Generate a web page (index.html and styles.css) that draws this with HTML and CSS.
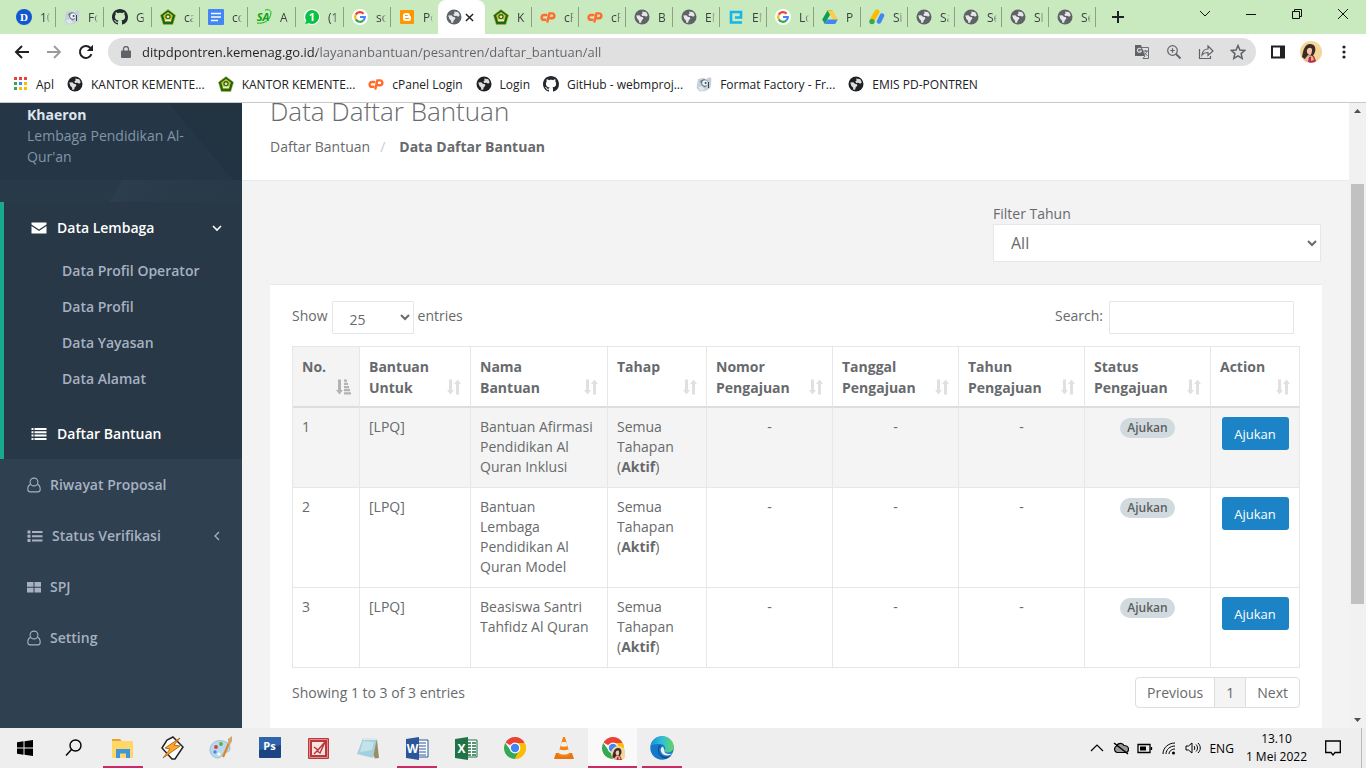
FILE: index.html
```html
<!DOCTYPE html>
<html lang="id">

<head>
    <meta charset="UTF-8">
    <meta name="viewport" content="width=device-width, initial-scale=1.0">
    <title>Data Daftar Bantuan</title>
    <link rel="stylesheet" href="styles.css">
</head>

<body>
    <!-- shared icons -->
    <svg class="sprite" aria-hidden="true">
        <symbol id="globe" viewBox="0 0 16 16">
            <circle cx="8" cy="8" r="7.5" fill="currentColor" />
            <path d="M2.2 6.6l3.2-.4 1.4 1.6 2.2.4.3 1.6-1.5 1.4-.6 2.2-1.8.7-.4-2.6-1.6-1.4zM8.2 2.6l4 .6 1.6 3-1.6 1.5-1.8-1-2.1.3-1-1.4 1.3-1z" fill="#fff" opacity=".85" />
        </symbol>
        <symbol id="kemenag" viewBox="0 0 16 16">
            <path d="M8 .6l7.6 5.6-2.8 9.2H3.2L.4 6.2z" fill="#14691d" stroke="#c9b52c" stroke-width=".5" />
            <path d="M8 3l4.8 3.6-1.8 6.2H5L3.2 6.6z" fill="#d5bd2a" />
            <circle cx="8" cy="7.6" r="2.6" fill="#14691d" />
            <path d="M5 10.4h6v1.6H5zM8 5.6l.6 1.4h1.3l-1 1 .4 1.4L8 8.7l-1.3.7.4-1.4-1-1h1.3z" fill="#efe9c0" />
        </symbol>
        <symbol id="github" viewBox="0 0 16 16">
            <path fill="#24292e" fill-rule="evenodd" d="M8 0C3.58 0 0 3.58 0 8c0 3.54 2.29 6.53 5.47 7.59.4.07.55-.17.55-.38 0-.19-.01-.82-.01-1.49-2.01.37-2.53-.49-2.69-.94-.09-.23-.48-.94-.82-1.13-.28-.15-.68-.52-.01-.53.63-.01 1.08.58 1.23.82.72 1.21 1.87.87 2.33.66.07-.52.28-.87.51-1.07-1.78-.2-3.64-.89-3.64-3.95 0-.87.31-1.59.82-2.15-.08-.2-.36-1.02.08-2.12 0 0 .67-.21 2.2.82.64-.18 1.32-.27 2-.27s1.36.09 2 .27c1.53-1.04 2.2-.82 2.2-.82.44 1.1.16 1.92.08 2.12.51.56.82 1.27.82 2.15 0 3.07-1.87 3.75-3.65 3.95.29.25.54.73.54 1.48 0 1.07-.01 1.93-.01 2.2 0 .21.15.46.55.38A8.01 8.01 0 0 0 16 8c0-4.42-3.58-8-8-8z" />
        </symbol>
        <symbol id="cpanel" viewBox="0 0 16 16">
            <path d="M6.3 6H4a2.4 2.4 0 0 0 0 4.8h1.2M7.4 12.6l2-8.2H12a2.3 2.3 0 0 1 0 4.8h-2" fill="none" stroke="#ff6c2c" stroke-width="2.4" stroke-linecap="round" />
        </symbol>
        <symbol id="factory" viewBox="0 0 16 16">
            <path d="M2 3l5-1 3 1 4-2 1.5 2-1 9-5 3-6 .5L.6 12z" fill="#c5d0dc" />
            <path d="M4 5l4-2 4 2-1 5-4 2z" fill="#66778c" />
            <circle cx="9" cy="7" r="2.800" fill="#edf2f7" />
            <circle cx="9.6" cy="7" r="1" fill="#39485c" />
            <path d="M2 11l5-1 2 4-5 .8z" fill="#dfe6ee" />
            <path d="M12.500 6v6" stroke="#34435a" />
        </symbol>
        <symbol id="google" viewBox="0 0 16 16">
            <circle cx="8" cy="8" r="8" fill="#fff" />
            <g fill="none" stroke-width="2.2">
                <path d="M3.8 5.6A4.8 4.8 0 0 1 11.5 4.7" stroke="#ea4335" />
                <path d="M3.8 5.6a4.8 4.8 0 0 0 0 4.8" stroke="#fbbc05" />
                <path d="M3.8 10.4a4.8 4.8 0 0 0 7.5 1.1" stroke="#34a853" />
                <path d="M11.3 11.5A4.8 4.8 0 0 0 12.8 8H8" stroke="#4285f4" />
            </g>
        </symbol>
        <symbol id="chrome" viewBox="0 0 24 24">
            <path d="M12 12L2.5 6.5A11 11 0 0 1 21.5 6.5z" fill="#ea4335" />
            <path d="M12 12V7h9.8A11 11 0 0 1 11.5 23z" fill="#fbbc05" />
            <path d="M2.2 7L7.7 14.5 16.3 14.5 11.8 23A11 11 0 0 1 2.2 7z" fill="#34a853" />
            <path d="M16.3 14.5L11.8 23A11 11 0 0 0 21.8 7H12z" fill="#fbbc05" />
            <circle cx="12" cy="12" r="5.4" fill="#fff" />
            <circle cx="12" cy="12" r="4.2" fill="#4285f4" />
        </symbol>
        <symbol id="face" viewBox="0 0 22 22">
            <circle cx="11" cy="11" r="11" fill="#f3d69a" />
            <path d="M2 16C3 9 5 3 10 3c5 0 6 4 5 8l-3 6-6 2z" fill="#3b2a25" />
            <path d="M7 9c1-3 5-3 5 0 0 3-1 5-2 5s-4-2-3-5z" fill="#f4c6ad" />
            <path d="M4 19l4-5 5 1 2 5c-3 2-8 2-11-1z" fill="#e9b59a" />
            <path d="M8 21l1-5 5-1 2 5c-2 2-5 2-8 1z" fill="#b3256a" />
            <path d="M11 15l2 1 1 3-3 1z" fill="#e8c33a" />
        </symbol>
        <symbol id="user" viewBox="0 0 14 16">
            <circle cx="7" cy="5" r="3.9" fill="none" stroke="currentColor" stroke-width="1.1" />
            <path d="M3.6 7.4C1.6 8 .8 10 .8 12.3c0 1.6 1 2.6 2.3 2.6h7.8c1.3 0 2.3-1 2.3-2.6 0-2.3-.8-4.3-2.8-4.9" fill="none" stroke="currentColor" stroke-width="1.1" />
        </symbol>
        <symbol id="sort" viewBox="0 0 14 16">
            <path d="M2 .5h3V11h2l-3.500 4.500L0 11h2zM9 15.500h3V5h2L10.500.5 7 5h2z" fill="currentColor" />
        </symbol>
        <symbol id="sort-asc" viewBox="0 0 15 16">
            <path d="M2 .5h3V11h2l-3.500 4.500L0 11h2zM8 .5h3v2.300H8zM8 3.700h4V6H8zM8 6.900h5v2.300H8zM8 10h6v2.300H8zM8 13.200h7v2.300H8z" fill="currentColor" />
        </symbol>
        <linearGradient id="edge-top" x1="0" y1="0" x2="1" y2="0">
            <stop offset="0" stop-color="#1b8fd6" />
            <stop offset=".5" stop-color="#2fc0d8" />
            <stop offset="1" stop-color="#62d85c" />
        </linearGradient>
    </svg>

    <header class="browser">
        <div class="tab-strip">
            <nav class="tabs" aria-label="Tab">
                <button class="tab"><svg viewBox="0 0 16 16"><circle cx="8" cy="8" r="8" fill="#1257d0" /><text x="8" y="12" class="fav-text serif">D</text></svg><span>10</span></button>
                <button class="tab"><svg><use href="#factory" /></svg><span>Fo</span></button>
                <button class="tab"><svg><use href="#github" /></svg><span>G</span></button>
                <button class="tab"><svg><use href="#kemenag" /></svg><span>ca</span></button>
                <button class="tab"><svg viewBox="0 0 16 16"><rect width="16" height="16" rx="1" fill="#4285f4" /><path d="M3 4.500h10M3 8h10M3 11.500h7" stroke="#fff" stroke-width="1.600" /></svg><span>co</span></button>
                <button class="tab"><svg viewBox="0 0 16 16"><path d="M1 14c7 1 13-2 14-10M9 1c5-1 6 1 6 3" fill="none" stroke="#15b51c" /><text x="7" y="12" class="fav-text green">SA</text></svg><span>A</span></button>
                <button class="tab"><svg viewBox="0 0 16 16"><circle cx="8" cy="8" r="8" fill="#fff" /><path d="M8 1a7 7 0 1 1-3 13.300L1.200 15l1-3.400A7 7 0 0 1 8 1z" fill="#0ac244" /><text x="8" y="12" class="fav-text">1</text></svg><span>(1</span></button>
                <button class="tab"><svg><use href="#google" /></svg><span>so</span></button>
                <button class="tab"><svg viewBox="0 0 16 16"><rect x="1" y="1" width="14" height="14" rx="1" fill="#ff9800" /><path d="M6.500 4h2.200a2 2 0 0 1 2 2c0 1 .3 1 1.300 1.400v2.400A2.200 2.200 0 0 1 9.800 12H6.500A2.500 2.500 0 0 1 4 9.500v-3A2.500 2.500 0 0 1 6.500 4z" fill="#fff" /><path d="M6.300 6.500h2M6.300 9.500h3.500" stroke="#ff9800" stroke-linecap="round" /></svg><span>Po</span></button>
                <button class="tab active"><svg><use href="#globe" /></svg><svg class="tab-close" viewBox="0 0 10 10"><path d="M1 1l8 8M9 1L1 9" stroke="#202124" stroke-width="1.600" /></svg></button>
                <button class="tab"><svg><use href="#kemenag" /></svg><span>K</span></button>
                <button class="tab"><svg><use href="#cpanel" /></svg><span>cP</span></button>
                <button class="tab"><svg><use href="#cpanel" /></svg><span>cP</span></button>
                <button class="tab"><svg><use href="#globe" /></svg><span>B</span></button>
                <button class="tab"><svg><use href="#globe" /></svg><span>EM</span></button>
                <button class="tab"><svg viewBox="0 0 16 16"><path d="M14 13.500H3V3h10v5.500H7" fill="none" stroke="#13b5ea" stroke-width="2.600" /></svg><span>EM</span></button>
                <button class="tab"><svg><use href="#google" /></svg><span>Lo</span></button>
                <button class="tab"><svg viewBox="0 0 16 16"><path d="M5.500 1.500h5L5.300 10.600 2.800 15 .2 10.500z" fill="#0f9d58" /><path d="M5.500 1.500h5l5.300 9h-5z" fill="#ffcd40" /><path d="M5.300 10.500h10.500L13.200 15H2.800z" fill="#4285f4" /></svg><span>P</span></button>
                <button class="tab"><svg viewBox="0 0 16 16"><path d="M8 3L3.500 10.500" stroke="#fbbc04" stroke-width="5" stroke-linecap="round" /><path d="M13 6.500L10 12.500" stroke="#4285f4" stroke-width="4.500" stroke-linecap="round" /><circle cx="3" cy="12.600" r="2.700" fill="#34a853" /></svg><span>Si</span></button>
                <button class="tab"><svg><use href="#globe" /></svg><span>Sa</span></button>
                <button class="tab"><svg><use href="#globe" /></svg><span>Se</span></button>
                <button class="tab"><svg><use href="#globe" /></svg><span>SI</span></button>
                <button class="tab"><svg><use href="#globe" /></svg><span>Se</span></button>
            </nav>
            <button class="new-tab" aria-label="Tab baru"><svg viewBox="0 0 12 12"><path d="M6 0v12M0 6h12" stroke="#202124" stroke-width="2" /></svg></button>
            <div class="window-buttons">
                <button aria-label="Cari tab"><svg viewBox="0 0 12 12"><path d="M1 3l5 5 5-5" /></svg></button>
                <button aria-label="Minimize"><svg viewBox="0 0 12 12"><path d="M1 6.500h10" /></svg></button>
                <button aria-label="Restore"><svg viewBox="0 0 12 12"><path d="M1.500 3.500h7v7h-7zM3.500 3.500v-2h7v7h-2" /></svg></button>
                <button aria-label="Close"><svg viewBox="0 0 12 12"><path d="M1 1l10 10M11 1L1 11" /></svg></button>
            </div>
        </div>

        <div class="toolbar">
            <div class="nav-buttons">
                <button aria-label="Kembali"><svg viewBox="0 0 16 16"><path d="M15 8H2M8 2L2 8l6 6" stroke-width="2" /></svg></button>
                <button class="disabled" aria-label="Maju"><svg viewBox="0 0 16 16"><path d="M1 8h13M8 2l6 6-6 6" stroke-width="1.800" /></svg></button>
                <button aria-label="Muat ulang"><svg viewBox="0 0 16 16"><path d="M13.500 10.200A6 6 0 1 1 12.300 3.800L13.500 5" stroke-width="2" /><path d="M15 .8V7H8.800z" fill="#202124" stroke="none" /></svg></button>
            </div>
            <div class="omnibox">
                <svg class="lock" viewBox="0 0 10 12"><path d="M1 4.500h8a1 1 0 0 1 1 1V11a1 1 0 0 1-1 1H1a1 1 0 0 1-1-1V5.500a1 1 0 0 1 1-1z" fill="#5f6368" /><path d="M2.500 5V3a2.500 2.500 0 0 1 5 0v2" fill="none" stroke="#5f6368" stroke-width="1.300" /></svg>
                <input type="text" class="url" aria-label="Alamat" value="ditpdpontren.kemenag.go.id/layananbantuan/pesantren/daftar_bantuan/all">
                <div class="nav-buttons">
                    <button aria-label="Terjemahkan"><svg viewBox="0 0 16 16"><path d="M1 1h6l4 11H1z" fill="#5f6368" stroke="none" /><path d="M8 3.500h6.500v11H9l2-2.500M9 7h5M11.500 6v1.500M13 7c0 2-2 3.500-3 4M10.500 8.500c.5 1.500 2 2.500 3 3" stroke-width=".9" /><path d="M7 5a2 2 0 1 0 .3 2H5.500" stroke="#e0e0e0" /></svg></button>
                    <button aria-label="Zoom"><svg viewBox="0 0 16 16"><circle cx="6.500" cy="6.500" r="4.800" /><path d="M10 10l4.500 4.500" stroke-width="1.800" /><path d="M4.300 6.500h4.400M6.500 4.300v4.400" /></svg></button>
                    <button aria-label="Bagikan"><svg viewBox="0 0 16 16"><path d="M1.500 5v9.500h11V12M4 11c.5-4 3-6 6-6V2l5 5-5 4.500V8.500C7.500 8.500 5.500 9 4 11z" /></svg></button>
                    <button aria-label="Tandai"><svg viewBox="0 0 16 16"><path d="M8 1.500l1.900 4.500 4.800.4-3.600 3.200 1.100 4.800L8 11.900l-4.200 2.500 1.100-4.800L1.300 6.400 6.100 6z" stroke-width="1.500" /></svg></button>
                </div>
            </div>
            <button aria-label="Panel samping"><svg viewBox="0 0 16 16"><path d="M2 2.500h12v11H2z" stroke-width="2" /><path d="M10 2h5v12h-5z" fill="#202124" stroke="none" /></svg></button>
            <button class="avatar" aria-label="Profil"><svg><use href="#face" /></svg></button>
            <button aria-label="Menu"><svg viewBox="0 0 16 16"><g fill="#202124" stroke="none"><circle cx="8" cy="3" r="1.600" /><circle cx="8" cy="8" r="1.600" /><circle cx="8" cy="13" r="1.600" /></g></svg></button>
        </div>

        <nav class="bookmarks" aria-label="Bookmark">
            <a href="#"><svg class="apps" viewBox="0 0 14 14"><path d="M0 0h3v3H0zM5 0h3v3H5zM10 0h3v3h-3z" fill="#ea4335" /><path d="M0 5h3v3H0zM0 10h3v3H0z" fill="#34a853" /><path d="M5 5h3v3H5z" fill="#4285f4" /><path d="M10 5h3v3h-3zM5 10h3v3H5zM10 10h3v3h-3z" fill="#fbbc05" /></svg>Apl</a>
            <a href="#"><svg><use href="#globe" /></svg>KANTOR KEMENTE...</a>
            <a href="#"><svg><use href="#kemenag" /></svg>KANTOR KEMENTE...</a>
            <a href="#"><svg><use href="#cpanel" /></svg>cPanel Login</a>
            <a href="#"><svg><use href="#globe" /></svg>Login</a>
            <a href="#"><svg><use href="#github" /></svg>GitHub - webmproj...</a>
            <a href="#"><svg><use href="#factory" /></svg>Format Factory - Fr...</a>
            <a href="#"><svg><use href="#globe" /></svg>EMIS PD-PONTREN</a>
        </nav>
    </header>

    <div class="page">
        <aside class="sidebar">
            <div class="profile">
                <strong>Khaeron</strong>
                <p>Lembaga Pendidikan Al-Qur'an</p>
            </div>
            <nav class="menu">
                <div class="menu-active">
                    <a class="menu-item" href="#">
                        <svg viewBox="0 0 16 16"><path d="M.5 2.500h15v2L8 9.500.5 4.500zM.5 6L8 11l7.500-5v7.500H.5z" fill="currentColor" /></svg>Data Lembaga
                        <svg class="arrow" viewBox="0 0 10 10"><path d="M1 3l4 4 4-4" fill="none" stroke="currentColor" stroke-width="1.600" /></svg>
                    </a>
                    <ul class="submenu">
                        <li><a href="#">Data Profil Operator</a></li>
                        <li><a href="#">Data Profil</a></li>
                        <li><a href="#">Data Yayasan</a></li>
                        <li><a href="#">Data Alamat</a></li>
                    </ul>
                    <a class="menu-item" href="#">
                        <svg viewBox="0 0 16 16"><path d="M.5 2h2v2h-2zM3.500 2h12v2h-12zM.5 5.300h2v2h-2zM3.500 5.300h12v2h-12zM.5 8.600h2v2h-2zM3.500 8.600h12v2h-12zM.5 12h2v2h-2zM3.500 12h12v2h-12z" fill="currentColor" /></svg>Daftar Bantuan
                    </a>
                </div>
                <a class="menu-item" href="#"><svg class="narrow"><use href="#user" /></svg>Riwayat Proposal</a>
                <a class="menu-item" href="#">
                    <svg viewBox="0 0 16 16"><path d="M.5 2.500h3v3h-3zM5 3h10.500v2H5zM.5 6.700h3v3h-3zM5 7.200h10.500v2H5zM.5 11h3v3h-3zM5 11.500h10.500v2H5z" fill="currentColor" /></svg>Status Verifikasi
                    <svg class="arrow" viewBox="0 0 10 10"><path d="M7 1L3 5l4 4" fill="none" stroke="currentColor" stroke-width="1.300" /></svg>
                </a>
                <a class="menu-item" href="#"><svg class="narrow" viewBox="0 0 14 16"><path d="M0 3h6.500v4.700H0zM7.500 3H14v4.700H7.500zM0 8.700h6.500v4.800H0zM7.500 8.700H14v4.800H7.500z" fill="currentColor" /></svg>SPJ</a>
                <a class="menu-item" href="#"><svg class="narrow"><use href="#user" /></svg>Setting</a>
            </nav>
        </aside>

        <main class="content">
            <div class="page-heading">
                <h2>Data Daftar Bantuan</h2>
                <ol class="breadcrumb">
                    <li><a href="#">Daftar Bantuan</a></li>
                    <li><strong>Data Daftar Bantuan</strong></li>
                </ol>
            </div>

            <div class="filter">
                <label for="tahun">Filter Tahun</label>
                <select id="tahun">
                    <option>All</option>
                    <option>2022</option>
                </select>
            </div>

            <section class="card">
                <div class="table-tools">
                    <label class="length" for="length">Show
                        <select id="length">
                            <option>25</option>
                            <option>50</option>
                        </select>
                        entries</label>
                    <label class="search" for="search">Search: <input type="search" id="search"></label>
                </div>

                <table>
                    <colgroup>
                        <col class="col-no">
                        <col class="col-untuk">
                        <col class="col-nama">
                        <col class="col-tahap">
                        <col class="col-info">
                        <col class="col-info">
                        <col class="col-info">
                        <col class="col-info">
                        <col class="col-action">
                    </colgroup>
                    <thead>
                        <tr>
                            <th class="sorted"><div>No.<svg><use href="#sort-asc" /></svg></div></th>
                            <th><div>Bantuan Untuk<svg><use href="#sort" /></svg></div></th>
                            <th><div>Nama Bantuan<svg><use href="#sort" /></svg></div></th>
                            <th><div>Tahap<svg><use href="#sort" /></svg></div></th>
                            <th><div>Nomor Pengajuan<svg><use href="#sort" /></svg></div></th>
                            <th><div>Tanggal Pengajuan<svg><use href="#sort" /></svg></div></th>
                            <th><div>Tahun Pengajuan<svg><use href="#sort" /></svg></div></th>
                            <th><div>Status Pengajuan<svg><use href="#sort" /></svg></div></th>
                            <th><div>Action<svg><use href="#sort" /></svg></div></th>
                        </tr>
                    </thead>
                    <tbody>
                        <tr>
                            <td>1</td>
                            <td>[LPQ]</td>
                            <td>Bantuan Afirmasi Pendidikan Al Quran Inklusi</td>
                            <td>Semua Tahapan (<b>Aktif</b>)</td>
                            <td class="center">-</td>
                            <td class="center">-</td>
                            <td class="center">-</td>
                            <td class="center"><span class="badge">Ajukan</span></td>
                            <td><button class="btn">Ajukan</button></td>
                        </tr>
                        <tr>
                            <td>2</td>
                            <td>[LPQ]</td>
                            <td>Bantuan Lembaga Pendidikan Al Quran Model</td>
                            <td>Semua Tahapan (<b>Aktif</b>)</td>
                            <td class="center">-</td>
                            <td class="center">-</td>
                            <td class="center">-</td>
                            <td class="center"><span class="badge">Ajukan</span></td>
                            <td><button class="btn">Ajukan</button></td>
                        </tr>
                        <tr>
                            <td>3</td>
                            <td>[LPQ]</td>
                            <td>Beasiswa Santri Tahfidz Al Quran</td>
                            <td>Semua Tahapan (<b>Aktif</b>)</td>
                            <td class="center">-</td>
                            <td class="center">-</td>
                            <td class="center">-</td>
                            <td class="center"><span class="badge">Ajukan</span></td>
                            <td><button class="btn">Ajukan</button></td>
                        </tr>
                    </tbody>
                </table>

                <div class="table-footer">
                    <p>Showing 1 to 3 of 3 entries</p>
                    <nav class="pagination" aria-label="Halaman">
                        <a href="#">Previous</a>
                        <a href="#" class="current">1</a>
                        <a href="#">Next</a>
                    </nav>
                </div>
            </section>
        </main>

        <div class="scrollbar">
            <svg viewBox="0 0 17 17"><path d="M5 10l3.500-4 3.500 4z" fill="#505050" /></svg>
            <div class="track"><div class="thumb"></div></div>
            <svg viewBox="0 0 17 17"><path d="M5 7l3.500 4L12 7z" fill="#505050" /></svg>
        </div>
    </div>

    <footer class="taskbar">
        <button aria-label="Start"><svg viewBox="0 0 24 24"><path d="M4 6.300l6.500-1v6.200H4zM11.500 5.200L20 4v7.500h-8.500zM4 12.500h6.500v6.200L4 17.800zM11.500 12.500H20V20l-8.500-1.200z" /></svg></button>
        <button aria-label="Cari"><svg viewBox="0 0 24 24"><circle cx="13.500" cy="9.500" r="5.500" fill="none" stroke="#000" stroke-width="1.400" /><path d="M9.500 13.500L4 19.500" stroke="#000" stroke-width="1.400" /></svg></button>
        <button class="open" aria-label="File Explorer"><svg viewBox="0 0 24 24"><path d="M1 3h8l1.500 2H22v17H1z" fill="#ffd767" /><path d="M1 3h8l1.500 2H1z" fill="#e3a52b" /><path d="M5 13h14v9h-4v-4.500H9V22H5z" fill="#3f96dc" /></svg></button>
        <button aria-label="Winamp"><svg viewBox="0 0 24 24"><path d="M13 1l10 10-8 12h-3L2 12l5-8z" fill="#fff" stroke="#222" stroke-width="1.500" /><path d="M20 2L5 12l5 1-7 9 17-12-6-1z" fill="#ffa52a" stroke="#a85507" stroke-width=".8" /></svg></button>
        <button aria-label="Paint"><svg viewBox="0 0 24 24"><path d="M14 5C7 3 1 8 1 14c0 4 3 8 8 8 4 0 3-4 6-5s6-1 6-5-3-6-7-7z" fill="#b8d9ef" stroke="#7da8c7" stroke-width=".6" /><circle cx="7" cy="11" r="1.900" fill="#d3423b" /><circle cx="12" cy="8" r="1.900" fill="#60ae3c" /><circle cx="6" cy="16" r="1.700" fill="#4c8bcb" /><circle cx="10" cy="18" r="1.600" fill="#fff" /><path d="M14 21L20 7" stroke="#df841f" stroke-width="2.200" /><path d="M19 8l0-5 4-3v5l-2 4z" fill="#d5a56e" /></svg></button>
        <button aria-label="Photoshop"><svg viewBox="0 0 24 24"><rect x="1" y="1" width="22" height="21" rx="1" fill="#1c4485" /><path d="M1 1h22v8L1 14z" fill="#2f64ab" /><text x="11.500" y="14" class="app-text small">Ps</text></svg></button>
        <button aria-label="Picture Manager"><svg viewBox="0 0 24 24"><rect x="1" y="2" width="21" height="21" rx="1" fill="#b9373d" /><path d="M2.500 3.500h18v18h-18z" fill="none" stroke="#e08d8d" /><rect x="5" y="6" width="13" height="13" fill="#f7e4e0" /><path d="M7 11l4 3 7-8-5 11-3-2-3 3" fill="none" stroke="#b9373d" stroke-width="1.500" /></svg></button>
        <button aria-label="Notepad"><svg viewBox="0 0 24 24"><path d="M8 2l13 2 2 18-4 .500z" fill="#9e8b63" /><path d="M7 2h14l-4 20-16-4z" fill="#a2d0de" /><path d="M7 2h14v2H7z" fill="#dfe6e9" /><path d="M7 5l11 1-2 8L4 16z" fill="#d2eaf0" opacity=".7" /></svg></button>
        <button class="open" aria-label="Word"><svg viewBox="0 0 24 24"><path d="M12 4h11v17H12z" fill="#fff" stroke="#2b579a" /><path d="M14 7h7M14 10h7M14 13h7M14 16h7M14 19h7" stroke="#2b579a" /><path d="M1 3l13-2v23L1 22z" fill="#2b579a" /><text x="7.500" y="16.500" class="app-text">W</text></svg></button>
        <button aria-label="Excel"><svg viewBox="0 0 24 24"><path d="M12 4h11v17H12z" fill="#fff" stroke="#217346" /><path d="M14 7h3M14 10h3M14 13h3M14 16h3M14 19h3M18 7h4M18 10h4M18 13h4M18 16h4M18 19h4" stroke="#217346" stroke-width="1.600" /><path d="M1 3l13-2v23L1 22z" fill="#217346" /><text x="7.500" y="16.500" class="app-text">X</text></svg></button>
        <button aria-label="Chrome"><svg><use href="#chrome" /></svg></button>
        <button aria-label="VLC"><svg viewBox="0 0 24 24"><path d="M4 17h16l2 6H2z" fill="#e87511" /><path d="M11 1h2l5 18c-3 2-9 2-12 0z" fill="#f4850f" /><path d="M9.700 6h4.600l1.200 4c-2 1-5 1-7 0zM7.500 13.500c3 1 6 1 9 0l1 3.500c-3 2-8 2-11 0z" fill="#f0f0f0" /></svg></button>
        <button class="open selected" aria-label="Chrome Khaeron"><svg viewBox="0 0 24 24"><use href="#chrome" width="24" height="24" /><use href="#face" x="10" y="10" width="15" height="15" /></svg></button>
        <button class="open" aria-label="Edge"><svg viewBox="0 0 24 24"><circle cx="12" cy="12" r="11.700" fill="#1678c8" /><path d="M.5 10.500C1.500 4 6.500.3 12 .3c7 0 11.700 5 11.700 10.200 0 4-3 6-6 6-2.500 0-3.500-1.200-3-2.500 1.500-3-1-6-4.500-6C6 8 2 8.500.5 10.500z" fill="url(#edge-top)" /><path d="M9 9.500c-3 5 0 12.500 7 13.200 2-.2 4-1.700 5.500-3.400C17 22 11 21 9.500 17S9.500 11 11 9.500z" fill="#114a8b" /><path d="M13 10.500c-2 .8-2.800 3-2 5 1 3 4 4.500 7 4 1.700-.3 3-1 4-2-2 .8-8 .8-7.500-3z" fill="#eee" /></svg></button>

        <div class="tray">
            <button aria-label="Ikon tersembunyi"><svg viewBox="0 0 16 16"><path d="M2 11l6-6 6 6" /></svg></button>
            <button aria-label="OneDrive"><svg viewBox="0 0 16 16"><path d="M4 12.500a3.500 3.500 0 0 1-.5-6.500C5 2.500 9.500 2.500 11 5.500c3 0 4.500 2 4.500 3.500 0 2-1.500 3.500-3.500 3.500z" fill="#999" /><path d="M1 3l14 11" stroke-width="1.500" /></svg></button>
            <button aria-label="Baterai"><svg viewBox="0 0 16 16"><path d="M1 4.500h12v8H1zM14.500 7v3" stroke-width="1.300" /><path d="M3 6.500h6v4H3z" fill="#000" stroke="none" /></svg></button>
            <button aria-label="Wi-Fi"><svg viewBox="0 0 16 16"><path d="M2 14C2 8 7 3 14 3M5 14c0-4.500 4-8 9-8M8 14c0-3 3-5 6-5" stroke-width="1" /><circle cx="12.500" cy="13" r="1.500" fill="#000" stroke="none" /></svg></button>
            <button aria-label="Suara"><svg viewBox="0 0 16 16"><path d="M1 6h2.500L7 3v10L3.500 10H1zM9 6c1 1 1 3 0 4M11 4.500c2 2 2 5 0 7M13 3c3 3 3 7 0 10" stroke-width="1" /></svg></button>
            <span class="lang">ENG</span>
            <time class="clock" datetime="2022-05-01T13:10"><span>13.10</span><span>1 Mei 2022</span></time>
            <button class="notice" aria-label="Notifikasi"><svg viewBox="0 0 16 16"><path d="M.7 1h14.600v11.500H10L8 15l-2-2.500H.7z" stroke-width="1.300" /></svg></button>
        </div>
    </footer>
</body>

</html>
```

FILE: styles.css
```css
* {
    margin: 0;
    padding: 0;
    box-sizing: border-box;
}

body {
    font-family: "Open Sans", "Noto Sans", sans-serif;
    font-size: 14px;
    line-height: 21px;
    color: #676a6c;
    height: 100vh;
    display: flex;
    flex-direction: column;
    overflow: hidden;
}

button {
    border: none;
    background: none;
    font: inherit;
    cursor: pointer;
}

a {
    color: inherit;
    text-decoration: none;
}

svg {
    width: 16px;
    height: 16px;
    flex: none;
    display: block;
}

.sprite {
    position: absolute;
    width: 0;
    height: 0;
}

/* browser */
.browser {
    flex: none;
    background: #fff;
    border-bottom: 1px solid #c8c8c8;
    color: #202124;
    font-size: 12px;
}

.tab-strip {
    display: flex;
    height: 34px;
    padding-left: 8px;
    background: #c9e9be;
}

.tabs {
    display: flex;
}

.tab {
    display: flex;
    align-items: center;
    gap: 8px;
    width: 47px;
    padding-left: 8px;
    color: #5f6368;
    overflow: hidden;
    background: linear-gradient(#8aa283, #8aa283) right center / 1px 20px no-repeat;
}

.tab:nth-child(-n+7) {
    width: 48px;
}

.tab span {
    width: 10px;
    overflow: hidden;
    color: #3c4043;
    text-align: left;
    -webkit-mask-image: linear-gradient(90deg, #000 60%, transparent);
    mask-image: linear-gradient(90deg, #000 60%, transparent);
}

.tab.active {
    background: #fff;
    border-radius: 8px 8px 0 0;
    gap: 3px;
}

.tab:nth-child(9) {
    background: none;
}

.tab-close {
    width: 9px;
    height: 9px;
}

.fav-text {
    fill: #fff;
    font-size: 11px;
    font-weight: 700;
    text-anchor: middle;
}

.fav-text.serif {
    font-family: "Liberation Serif", serif;
}

.fav-text.green {
    fill: #0ca514;
    font-style: italic;
}

.new-tab {
    padding: 0 16px;
}

.new-tab svg {
    width: 12px;
    height: 12px;
}

.window-buttons {
    margin-left: auto;
    display: flex;
    height: 28px;
}

.window-buttons button {
    width: 46px;
    display: flex;
    align-items: center;
    justify-content: center;
}

.window-buttons svg {
    width: 12px;
    height: 12px;
    fill: none;
    stroke: #111;
}

.toolbar {
    display: flex;
    align-items: center;
    height: 36px;
    padding: 0 14px;
    gap: 14px;
}

.nav-buttons {
    display: flex;
    gap: 16px;
}

.toolbar svg {
    fill: none;
    stroke: #202124;
    stroke-width: 1.2;
}

.toolbar .disabled {
    opacity: .45;
}

.omnibox {
    flex: 1;
    display: flex;
    align-items: center;
    gap: 11px;
    height: 28px;
    padding: 0 10px 0 13px;
    border-radius: 14px;
    background: #e0e0e0;
}

.omnibox svg {
    stroke: #5f6368;
}

.omnibox .lock {
    width: 10px;
    height: 12px;
    stroke: none;
}

/* the host part is darker than the path */
.url {
    flex: 1;
    min-width: 0;
    border: none;
    outline: none;
    font: 13px "Open Sans", "Noto Sans", sans-serif;
    background: linear-gradient(90deg, #202124 175px, #5f6368 175px);
    -webkit-background-clip: text;
    background-clip: text;
    -webkit-text-fill-color: transparent;
}

.toolbar .avatar svg {
    width: 22px;
    height: 22px;
    stroke: none;
}

.bookmarks {
    display: flex;
    align-items: center;
    gap: 13px;
    height: 32px;
    padding: 0 14px 4px;
}

.bookmarks a {
    display: flex;
    align-items: center;
    gap: 8px;
}

.bookmarks .apps {
    width: 14px;
    height: 14px;
}

/* page */
.page {
    flex: 1;
    min-height: 0;
    display: flex;
    overflow: hidden;
}

.sidebar {
    width: 242px;
    flex: none;
    background: #2f4050;
    color: #a7b1c2;
    font-weight: 600;
}

.profile {
    height: 99px;
    padding: 1px 48px 0 27px;
    font-weight: 400;
    color: #8095a8;
    background:
        linear-gradient(120deg, transparent 48%, rgba(70, 100, 120, .12) 48%, transparent 90%) 0 77px / 100% 22px no-repeat,
        linear-gradient(50deg, transparent 76%, rgba(10, 25, 35, .12) 76%) 0 0 / 100% 77px no-repeat,
        linear-gradient(#253746 77px, #283947 77px);
}

.profile strong {
    color: #dfe4ed;
}

.menu-active {
    background: #293846;
    border-left: 4px solid #19aa8d;
}

.menu-item {
    display: flex;
    align-items: center;
    gap: 9px;
    height: 51px;
    padding: 0 20px 0 27px;
}

.menu-active .menu-item {
    color: #fff;
    gap: 10px;
}

.menu-item .narrow {
    width: 14px;
}

.menu-item .arrow {
    width: 10px;
    height: 10px;
    margin-left: auto;
}

.submenu {
    list-style: none;
    padding-bottom: 11px;
}

.submenu a {
    display: block;
    padding-left: 58px;
    line-height: 36px;
}

.content {
    flex: 1;
    min-width: 0;
    overflow: hidden;
    background: #f3f3f4;
}

.page-heading {
    display: flow-root;
    height: 78px;
    padding: 0 28px;
    background: #fff;
    border-bottom: 1px solid #e7eaec;
}

/* top edge is scrolled just under the toolbar */
.page-heading h2 {
    margin: -6px 0 10px;
    font-size: 26px;
    font-weight: 300;
    line-height: 29px;
}

.breadcrumb {
    display: flex;
    list-style: none;
}

.breadcrumb li + li::before {
    content: "/";
    padding: 0 14px 0 10px;
    color: #ccc;
}

.filter {
    width: 328px;
    margin: 22px 28px 22px auto;
}

.filter label {
    display: block;
}

select,
input[type="search"] {
    border: 1px solid #e5e6e7;
    border-radius: 1px;
    background: #fff;
    color: inherit;
    font: inherit;
}

.filter select {
    width: 100%;
    height: 38px;
    padding: 6px 0 6px 13px;
    font-size: 16px;
}

.card {
    margin: 0 27px 0 28px;
    min-height: 500px;
    padding: 16px 22px;
    background: #fff;
    border-top: 1px solid #e7eaec;
}

.table-tools {
    display: flex;
    justify-content: space-between;
    margin-bottom: 12px;
}

.table-tools label {
    display: flex;
    line-height: 30px;
}

.length {
    gap: 4px;
}

.length select {
    width: 82px;
    height: 33px;
    padding: 4px 0 0 13px;
}

.search {
    gap: 6px;
    padding-right: 6px;
}

.search input {
    width: 185px;
    height: 33px;
    padding: 0 8px;
}

table {
    width: 100%;
    table-layout: fixed;
    border-collapse: separate;
    border-spacing: 0;
    border: 1px solid #e7e7e7;
    border-right: none;
}

.col-no {
    width: 67px;
}

.col-untuk {
    width: 111px;
}

.col-nama {
    width: 137px;
}

.col-tahap {
    width: 99px;
}

.col-info {
    width: 126px;
}

.col-action {
    width: 89px;
}

th,
td {
    padding: 9px;
    border-right: 1px solid #e7e7e7;
    text-align: left;
    vertical-align: top;
}

th {
    padding-bottom: 8px;
    border-bottom: 2px solid #ddd;
}

th div {
    display: flex;
    justify-content: space-between;
    align-items: flex-start;
    gap: 10px;
    min-height: 42px;
}

th svg {
    width: 14px;
    align-self: flex-end;
    margin-bottom: 3px;
    color: #e0e0e0;
}

.sorted svg {
    width: 15px;
    color: #b3b3b3;
}

.sorted,
tbody tr:nth-child(odd) {
    background: #f4f4f4;
}

tbody tr:last-child {
    background: #fff;
}

td {
    padding-bottom: 10px;
    line-height: 20px;
}

tr + tr td {
    border-top: 1px solid #e7e7e7;
}

.center {
    text-align: center;
}

.badge {
    display: inline-block;
    padding: 0 7px;
    border-radius: 10px;
    background: #d1dade;
    color: #5e5e5e;
    font-size: 12px;
    font-weight: 600;
    line-height: 20px;
}

.btn {
    display: block;
    width: 67px;
    height: 33px;
    margin: 0 auto;
    border-radius: 3px;
    background: #1c84c6;
    color: #fff;
    font-size: 13px;
    font-weight: 500;
    line-height: 20px;
}

.table-footer {
    display: flex;
    justify-content: space-between;
    align-items: center;
    margin-top: 9px;
}

.pagination {
    display: flex;
    border: 1px solid #ddd;
    border-radius: 4px;
    overflow: hidden;
}

.pagination a {
    padding: 4px 11px;
}

.pagination .current {
    background: #f4f4f4;
    border: solid #ddd;
    border-width: 0 1px;
}

.scrollbar {
    width: 17px;
    flex: none;
    display: flex;
    flex-direction: column;
    background: #f1f1f1;
}

.scrollbar svg {
    width: 17px;
    height: 17px;
}

.track {
    flex: 1;
    padding-top: 64px;
}

.thumb {
    width: 13px;
    height: 420px;
    margin: 0 auto;
    background: #c1c1c1;
}

/* taskbar */
.taskbar {
    flex: none;
    display: flex;
    height: 40px;
    background: #eee;
    color: #000;
    font-size: 12px;
}

.taskbar > button {
    display: flex;
    flex-direction: column;
    align-items: center;
    justify-content: center;
    width: 49px;
}

.taskbar > button svg {
    width: 24px;
    height: 24px;
}

.taskbar .open {
    background: linear-gradient(#cb2a66, #cb2a66) center bottom / 40px 2px no-repeat;
}

.taskbar .selected {
    background: linear-gradient(#cb2a66, #cb2a66) center bottom / 100% 2px no-repeat #f9f9f9;
}

.app-text {
    fill: #fff;
    font-size: 12px;
    font-weight: 700;
    text-anchor: middle;
}

.app-text.small {
    font-size: 11px;
}

.tray {
    display: flex;
    align-items: center;
    gap: 8px;
    margin-left: auto;
    margin-right: 4px;
    padding-right: 20px;
    border-right: 1px solid #bbb;
}

.tray svg {
    fill: none;
    stroke: #000;
    stroke-width: 1.2;
}

.clock {
    display: flex;
    flex-direction: column;
    align-items: center;
    margin: 0 10px 0 4px;
    line-height: 18px;
}
```
